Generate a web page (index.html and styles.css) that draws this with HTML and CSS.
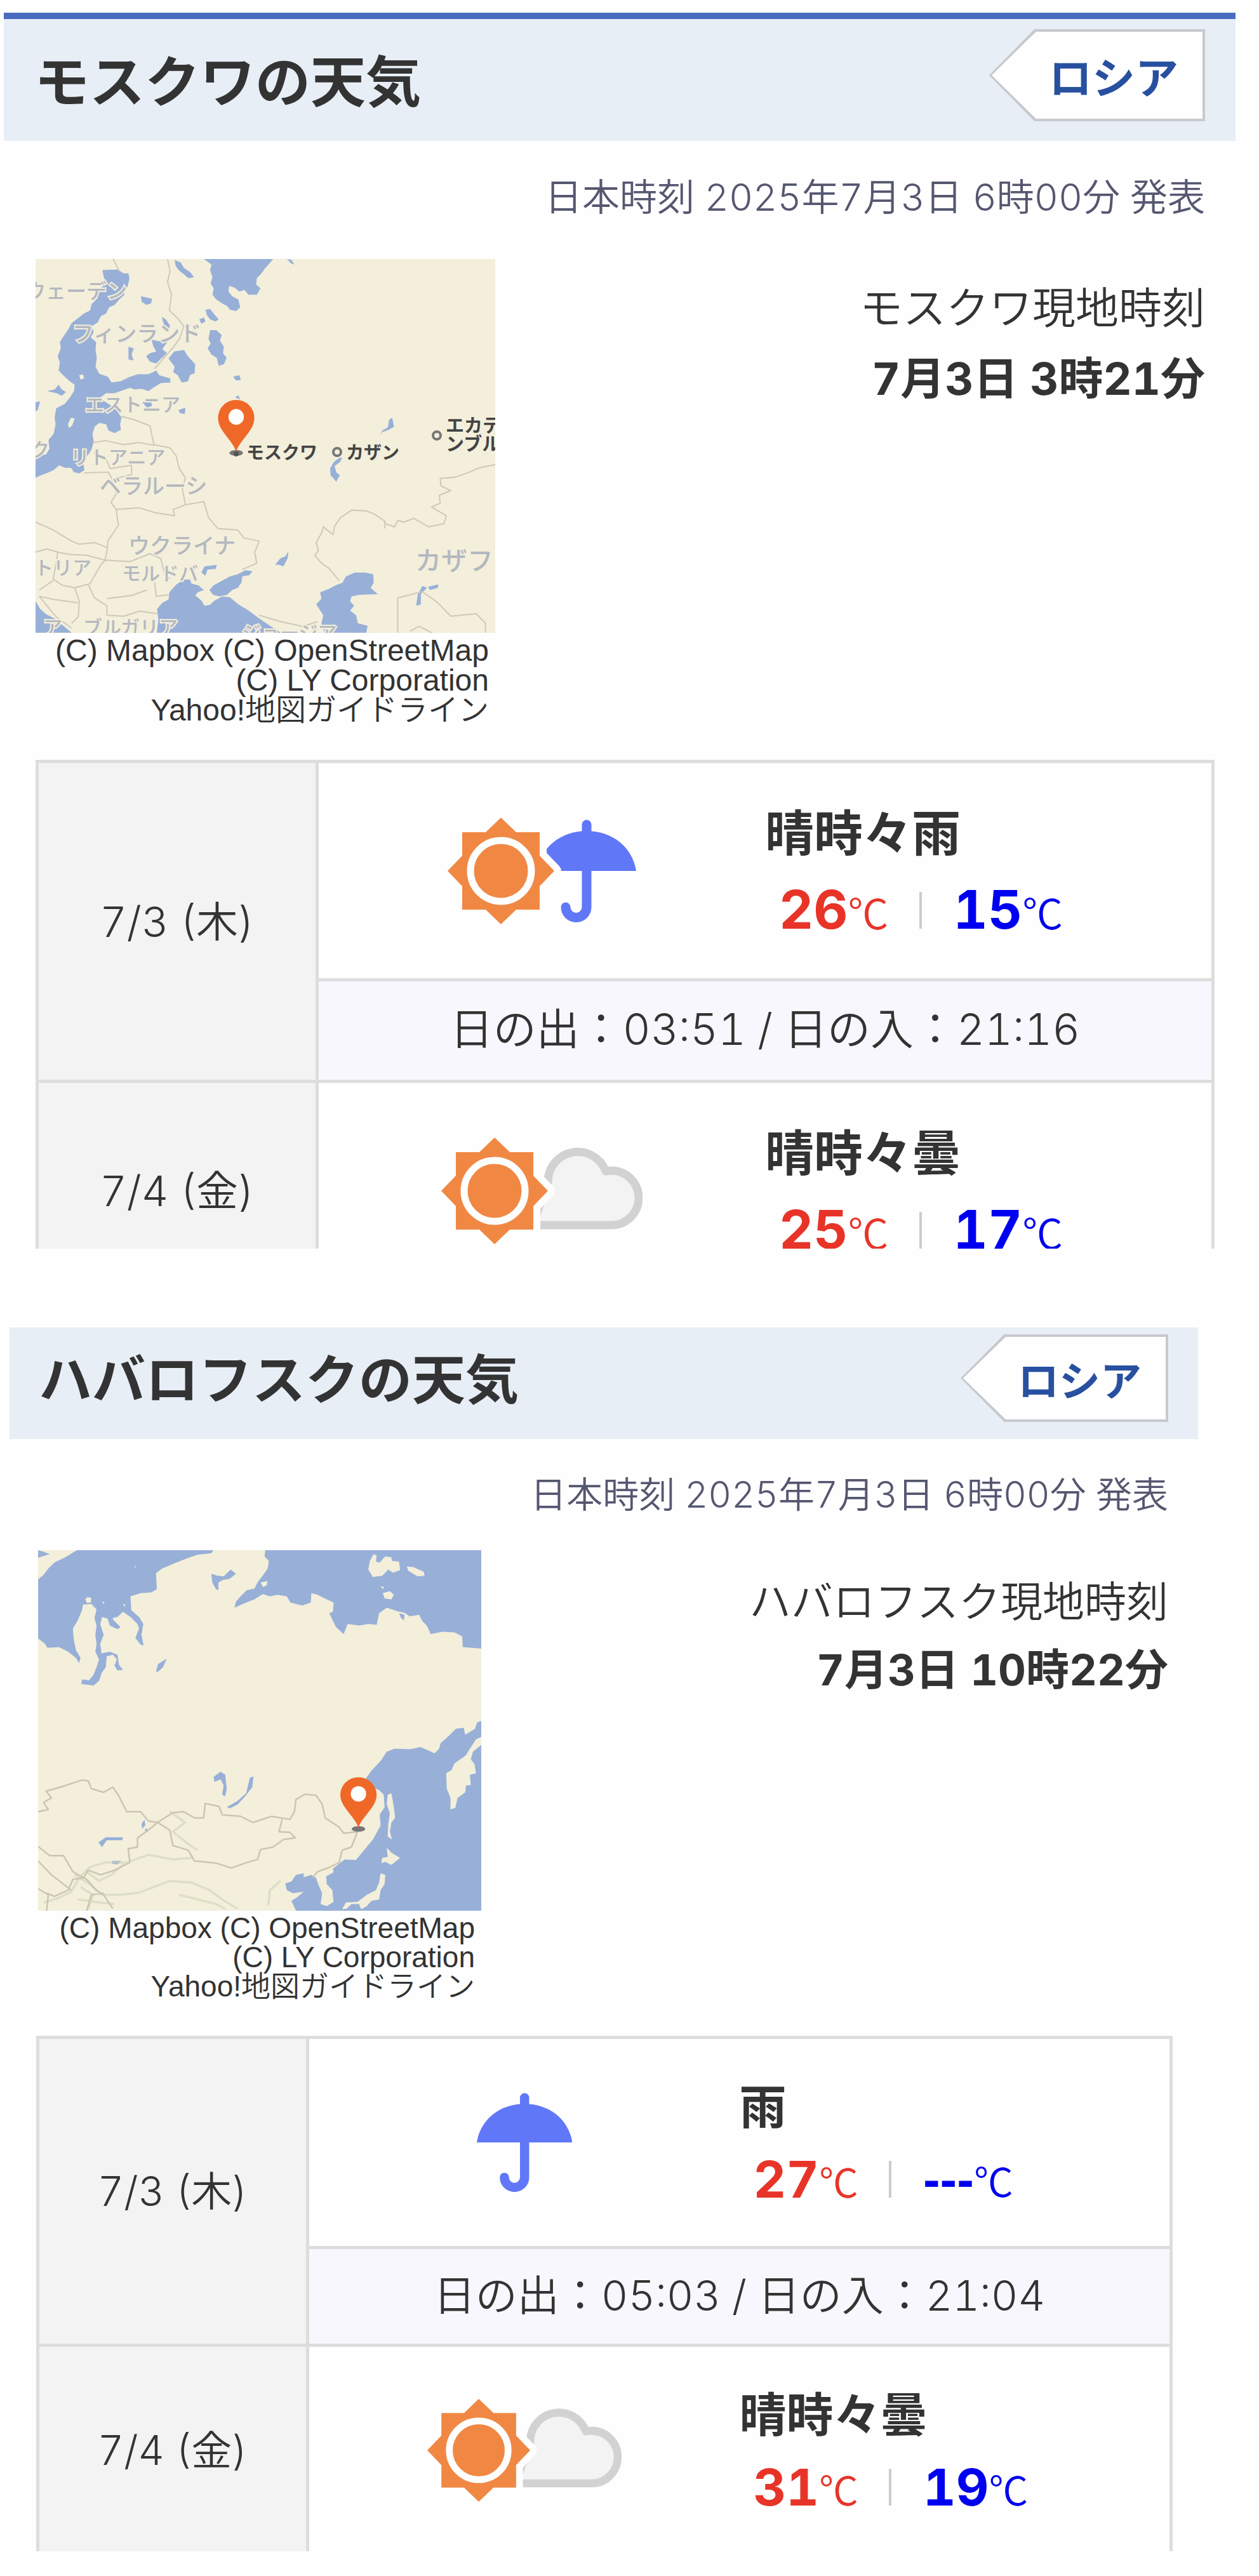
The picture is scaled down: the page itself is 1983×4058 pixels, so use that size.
FILE: index.html
```html
<!DOCTYPE html>
<html lang="ja">
<head>
<meta charset="utf-8">
<meta name="viewport" content="width=device-width, initial-scale=1">
<title>ロシアの天気</title>
<link rel="stylesheet" href="styles.css">
</head>
<body>
<svg class="defs" aria-hidden="true">
  <defs>
    <g id="sun">
      <path d="M-61-61H-24L0-84 24-61H61V-24L84 0 61 24V61H24L0 84-24 61H-61V24L-84 0-61-24Z" fill="#f08844" stroke="#fefefe" stroke-width="22" stroke-linejoin="round" paint-order="stroke"/>
      <circle r="48" fill="none" stroke="#fefefe" stroke-width="11"/>
    </g>
    <g id="umbrella">
      <path d="M-78 0C-72-38-40-63 0-63S72-38 78 0Z" fill="#6078f8"/>
      <path d="M0-73V57a16 16 0 0 1-33 0" fill="none" stroke="#6078f8" stroke-width="15" stroke-linecap="round"/>
    </g>
    <path id="cloud" d="M60 54H184A43 43 0 0 0 184-32L175-31A47 47 0 0 0 84-14L60 54" fill="#f3f3f3" stroke="#d2d2d2" stroke-width="13" stroke-linejoin="round"/>
    <g id="pin">
      <ellipse cy="110" rx="22" ry="9" fill="#777"/>
      <path d="M0 106C-14 66-59 40-59-1A59 57 0 0 1 59-1C59 40 14 66 0 106Z" fill="#f06828"/>
      <circle cy="-4" r="25" fill="#fefefe"/>
    </g>
  </defs>
</svg>

<section class="city city-moscow">
  <header class="city-head">
    <h1 class="city-title">モスクワの天気</h1>
    <a class="country" href="#"><span class="country-name">ロシア</span></a>
  </header>
  <p class="issued">日本時刻 2025年7月3日 6時00分 発表</p>
  <div class="place">
    <figure class="map">
      <svg class="map-art" viewBox="0 0 724 589" role="img" aria-label="モスクワ周辺の地図">
        <rect width="724" height="589" fill="#f3efdb"/>
        <g transform="scale(.4847 .4976) translate(-33 -37)">
          <g fill="#98b0d8">
            <path d="M250 72L300 70 318 82 335 82 338 100 332 125 318 135 322 150 305 165 290 182 272 190 262 210 245 218 235 238 215 250 222 268 212 285 230 300 228 325 232 350 228 378 240 400 268 410 280 428 310 424 335 412 365 402 400 402 425 390 435 405 470 415 472 428 440 430 415 445 400 455 378 448 355 450 340 445 318 452 290 462 262 462 240 478 258 488 285 505 300 520 312 540 308 560 310 578 290 588 270 580 262 560 240 556 225 568 218 590 222 615 215 640 200 662 188 685 192 705 175 716 158 712 148 698 128 698 110 690 92 705 70 715 50 722 33 730V655L50 660 68 655 78 638 75 610 92 590 98 560 95 540 100 510 128 495 145 475 158 455 160 435 145 425 128 410 108 390 112 365 105 345 115 320 112 300 125 280 138 262 150 240 170 225 190 210 210 200 215 180 235 160 228 140 245 130 262 112 255 95Z"/>
            <path d="M580 37L605 55 600 72 608 95 602 115 612 130 608 150 620 165 640 178 655 185 665 198 685 202 698 190 692 165 672 155 660 140 662 122 680 128 695 140 712 135 725 150 752 150 764 130 750 118 752 98 765 85 780 65 792 52 805 37ZM485 40L505 48 515 65 535 78 548 95 530 98 515 85 498 72 488 58ZM850 37L865 40 874 55 862 50ZM375 155L392 158 412 163 408 178 392 182 378 172ZM585 198L600 195 612 210 628 228 618 235 600 228 590 215ZM565 228L580 222 585 235 572 242ZM600 262L620 262 638 278 632 295 645 315 642 335 654 350 645 370 628 375 622 350 605 340 592 320 602 305 595 290ZM483 330L515 325 528 345 552 370 550 398 535 405 528 425 508 428 495 405 480 395 485 378 465 352ZM443 220L458 230 470 248 465 262 452 250ZM410 292L435 298 455 290 462 300 445 322 460 335 438 355 425 368 405 362 392 345 405 335 425 330 415 312ZM335 315L352 320 345 340 352 358 335 355ZM675 410L695 405 700 420 685 422ZM70 455L95 450 108 435 118 450 132 458 118 470 102 462ZM33 490L48 488 40 515 33 520ZM380 490L408 488 412 502 395 508ZM498 515L520 508 518 528 502 525ZM682 475L692 468 698 482Z"/>
            <path d="M427 1220L432 1180 428 1145 445 1125 465 1115 468 1092 490 1068 515 1052 535 1052 540 1065 562 1070 580 1085 560 1092 552 1102 572 1118 582 1135 600 1132 615 1118 640 1105 665 1108 692 1130 725 1150 760 1175 790 1195 830 1220ZM598 1085L612 1070 640 1055 665 1042 690 1035 715 1022 738 1025 728 1038 705 1042 702 1062 690 1078 672 1085 655 1100 630 1105 610 1100ZM972 1220L962 1190 968 1165 945 1130 962 1112 958 1092 985 1082 1008 1070 1030 1062 1042 1042 1070 1030 1105 1030 1130 1035 1132 1062 1122 1078 1145 1098 1085 1100 1060 1105 1055 1120 1068 1135 1055 1150 1075 1165 1080 1190 1112 1198 1108 1220ZM33 1120L48 1145 68 1162 95 1175 112 1190 132 1205 150 1220H33ZM812 1005L828 985 845 978 855 962 852 985 838 1010 825 1005ZM572 1030L582 1010 622 1005 618 1018 592 1020 585 1040ZM1270 1135L1275 1100 1290 1072 1305 1078 1285 1098 1285 1130ZM1308 1075L1342 1067 1340 1078 1315 1085ZM990 700L1002 680 1018 668 1030 665 1022 680 1005 692 1010 712 1022 722 1010 742 992 722ZM1152 595L1160 580 1178 570 1182 545 1192 540 1198 568 1180 578 1160 585Z"/>
          </g>
          <path d="M138 560l10-20 12 2-8 22-10 8zM175 405l12-2 4 12-12 4z" fill="#f3efdb"/>
          <g fill="none" stroke="#cfc8b8" stroke-width="4" stroke-linejoin="round">
            <path d="M285 37L305 75M462 37L470 75 462 110 475 150 468 200 495 225 515 250 500 290 478 320 450 350 420 385M310 535L350 545 405 565 412 600 418 625 470 635 490 660 500 700 520 730 510 765 520 815 480 830 485 850 420 840 370 825 295 830 278 808 295 780 285 740 270 712 190 714M222 618L260 612 320 625 370 618 418 627M222 650L260 665 275 700 345 690 345 720 300 730M520 815L580 805 595 855 625 890 690 895 710 920 760 930 745 965 752 1000 705 1020M295 830L302 880 268 930 265 965 258 990 340 995 405 970 440 985 450 1025 470 1050M33 870L90 895 150 930 175 940 225 935 265 950M33 965L70 955 105 965 100 1000 90 1050 120 1070 160 1078 210 1065 245 1005 260 990M105 965L140 972 200 975 258 990M160 1078L175 1120 172 1170 150 1190M205 1070L225 1110 265 1135 265 1165 320 1168 370 1152 428 1160M265 1112L345 1102 395 1085M420 1060L425 1105 465 1100M45 1105L95 1115 170 1125M45 1085L90 1055M45 1105L100 1170 150 1205M760 1165L830 1185 900 1200 950 1185"/>
            <path d="M1527 688L1475 698 1435 715 1395 728 1348 732 1350 755 1382 770 1345 785 1348 810 1320 822 1368 850 1360 875 1310 885 1262 858 1230 870 1210 865 1200 885 1170 875 1165 865 1135 845 1110 835 1060 832 1025 855 1005 882 1000 910 968 885 962 905 945 935 952 960 940 975 962 1000 985 1015 1020 1055M1210 1220V1110L1290 1090 1340 1125 1382 1168 1465 1160 1495 1190V1220M1250 1215L1280 1200 1320 1220M1168 865V890"/>
          </g>
          <use href="#pin" x="685" y="541"/>
        </g>
        <g class="label-country">
          <text x="144" y="62" font-size="32" text-anchor="end">ウェーデン</text>
          <text x="58" y="130" font-size="34">フィンランド</text>
          <text x="78" y="240" font-size="30">エストニア</text>
          <text x="22" y="311" font-size="30" text-anchor="end">ク</text>
          <text x="55" y="323" font-size="30">リトアニア</text>
          <text x="101" y="370" font-size="34">ベラルーシ</text>
          <text x="146" y="464" font-size="34">ウクライナ</text>
          <text x="88" y="497" font-size="30" text-anchor="end">トリア</text>
          <text x="136" y="506" font-size="30">モルドバ</text>
          <text x="598" y="490" font-size="41">カザフ</text>
          <text x="12" y="591" font-size="30">ア</text>
          <text x="75" y="591" font-size="30">ブルガリア</text>
          <text x="325" y="600" font-size="30">ジョージア</text>
        </g>
        <g class="label-city">
          <text x="332" y="315" font-size="28">モスクワ</text>
          <text x="489" y="315" font-size="28">カザン</text>
          <text x="646" y="273" font-size="29">エカテ</text>
          <text x="646" y="302" font-size="29">ンブル</text>
        </g>
        <g fill="#f3efdb" stroke="#777" stroke-width="4">
          <circle cx="475" cy="304" r="6"/>
          <circle cx="632" cy="278" r="6"/>
        </g>
        <circle cx="316" cy="307" r="4" fill="#555"/>
      </svg>
      <figcaption class="credit">(C) Mapbox (C) OpenStreetMap<br>(C) LY Corporation<br><a class="credit-link" href="#">Yahoo!地図ガイドライン</a></figcaption>
    </figure>
    <p class="local"><span class="local-name">モスクワ現地時刻</span><time class="local-time">7月3日 3時21分</time></p>
  </div>
  <div class="forecast">
    <table class="days">
      <tbody>
        <tr class="day">
          <th class="date" rowspan="2" scope="rowgroup">7/3 (木)</th>
          <td class="weather"><div class="summary">
            <span class="icon"><svg class="icon-pair" viewBox="-84 -85 298 170" role="img" aria-label="晴時々雨"><use href="#umbrella" x="135"/><use href="#sun"/></svg></span>
            <div class="detail"><p class="sky">晴時々雨</p><p class="temps"><span class="high"><b class="deg">26</b>℃</span><span class="low"><b class="deg">15</b>℃</span></p></div>
          </div></td>
        </tr>
        <tr><td class="sunrise">日の出：03:51 / 日の入：21:16</td></tr>
        <tr class="day">
          <th class="date" scope="row">7/4 (金)</th>
          <td class="weather"><div class="summary">
            <span class="icon"><svg class="icon-wide" viewBox="-84 -85 317 170" role="img" aria-label="晴時々曇"><use href="#cloud"/><use href="#sun"/></svg></span>
            <div class="detail"><p class="sky">晴時々曇</p><p class="temps"><span class="high"><b class="deg">25</b>℃</span><span class="low"><b class="deg">17</b>℃</span></p></div>
          </div></td>
        </tr>
      </tbody>
    </table>
  </div>
</section>

<section class="city city-khabarovsk">
  <header class="city-head">
    <h1 class="city-title">ハバロフスクの天気</h1>
    <a class="country" href="#"><span class="country-name">ロシア</span></a>
  </header>
  <p class="issued">日本時刻 2025年7月3日 6時00分 発表</p>
  <div class="place">
    <figure class="map">
      <svg class="map-art" viewBox="42 45 1440 1172" role="img" aria-label="ハバロフスク周辺の地図">
        <rect x="42" y="45" width="1440" height="1172" fill="#98b0d8"/>
        <g fill="#f3efdb">
          <path d="M42 332L65 350 72 362 110 360 140 375 165 395 175 412 180 395 165 370 158 335 155 300 170 275 185 240 188 222 215 220 232 238 225 265 232 290 228 320 232 350 228 375 240 400 232 425 222 450 208 468 185 465 182 480 222 485 240 470 248 445 262 425 265 390 285 385 298 400 290 420 300 436 318 434 305 418 300 385 275 375 248 380 244 350 255 320 244 285 250 262 268 268 275 290 300 302 310 295 285 270 285 265 300 262 318 245 342 262 365 285 370 300 358 330 375 352 385 355 378 320 384 285 370 262 345 240 342 195 375 185 410 182 428 172 425 120 445 105 480 90 525 72 560 60 605 55 612 45 780 45 778 65 792 80 788 105 770 130 755 150 745 170 720 175 700 195 685 212 680 232 712 218 745 205 772 188 795 195 820 190 850 195 862 215 900 225 928 215 930 185 950 190 980 205 1002 215 1000 245 988 250 1010 295 1035 318 1048 285 1085 290 1115 285 1142 288 1150 250 1175 232 1215 245 1232 248 1250 260 1280 255 1290 275 1305 290 1318 318 1355 310 1395 312 1420 325 1422 360 1482 365V600L1468 605 1462 625 1430 645 1425 622 1400 625 1375 650 1350 672 1345 690 1330 705 1308 695 1285 685 1250 692 1200 690 1175 700 1155 730 1125 762 1105 790 1125 815 1150 825 1165 840 1168 880 1152 905 1155 940 1130 985 1105 1015 1075 1052 1038 1050 1025 1060 1000 1080 1002 1092 978 1105 980 1130 998 1150 1002 1188 980 1202 960 1195 965 1160 952 1130 945 1110 930 1100 905 1108 905 1095 880 1100 865 1122 845 1128 850 1150 870 1160 905 1155 885 1172 865 1185 880 1217H42Z"/>
          <path d="M42 45H168L130 68 95 85 75 105 60 125 42 140V70L80 58 60 50ZM1132 58L1142 62 1140 82 1152 85 1170 65 1190 68 1192 80 1215 82 1218 110 1195 118 1180 108 1160 128 1130 132 1115 108 1120 80ZM1240 98L1262 100 1295 115 1298 128 1275 130 1245 112ZM1162 185L1185 178 1198 190 1190 205 1168 202ZM1155 162l10 2-2 8zM195 205l8-8 12 4-2 14-12 2zM765 150l22-5-2 14-12 6zM250 212l8 2-3 7zM318 220l8 2-3 7zM355 96l5 2-3 5z"/>
          <path d="M1482 652L1465 660 1445 690 1432 712 1395 738 1385 760 1368 770 1370 820 1382 850 1382 888 1398 882 1405 850 1430 832 1432 810 1448 808 1445 775 1465 770 1460 740 1448 725 1455 700 1482 678ZM1178 840L1190 835 1198 880 1202 915 1190 930 1185 960 1192 985 1178 975 1180 935 1185 900 1175 870ZM1175 1012L1190 1028 1218 1045 1200 1060 1190 1068 1170 1058 1158 1062 1160 1045 1178 1042ZM1155 1095L1170 1100 1168 1130 1155 1150 1150 1180 1125 1185 1110 1202 1092 1212 1085 1195 1060 1195 1045 1210 1030 1212 1042 1190 1080 1188 1110 1165 1140 1150 1150 1125Z"/>
        </g>
        <g fill="#98b0d8">
          <path d="M605 122L625 128 645 130 668 108 685 122 665 138 642 142 628 150 628 175 620 172 608 150ZM425 440L432 415 460 398 448 425 432 440ZM655 880L690 860 718 835 730 785 742 780 738 815 715 845 690 872 665 884ZM612 782L635 765 650 775 655 820 650 845 640 840 645 810 635 790 615 798ZM238 995L262 978 318 978 315 988 265 988 250 1010ZM282 1055L312 1055 300 1066 282 1064ZM378 935L388 920 390 940 380 950ZM388 955L395 948 398 962ZM1215 250l18 5-2 18-10-8z"/>
        </g>
        <g fill="none" stroke="#cfd2b8" stroke-width="7" stroke-linejoin="round" opacity=".6">
          <path d="M60 1190L110 1175 150 1155 175 1110 210 1075 260 1060 330 1060 400 1035 480 1050 545 1045M160 1100L210 1130 250 1165 310 1165 370 1158 430 1135 470 1120 540 1125 600 1150 640 1180 690 1210M200 1090L240 1120 280 1100 320 1065M180 1140L220 1165 205 1210M470 895L520 930 480 960 530 1000 560 1020M500 1165L560 1180 620 1195 650 1210M170 1180L240 1190 290 1195M790 1200L795 1150 830 1120"/>
        </g>
        <g fill="none" stroke="#cbc4b0" stroke-width="5" stroke-linejoin="round">
          <path d="M42 895L75 888 60 865 85 850 68 828 115 815 185 792 205 795 215 820 255 832 285 815 305 845 330 895 375 895 400 925 430 930 480 898 515 895 550 915 580 915 585 868 630 878 640 905 700 910 740 930 800 910 860 920 875 895 880 855 910 838 945 842 965 870 975 915 1020 945 1035 965 1080 960 1060 1010 1030 1020 1020 1060M430 930L400 955 365 980 365 1010 335 1015 340 1060 290 1085 245 1100 205 1085 190 1110 155 1115 140 1150 95 1170 70 1160M430 930L470 955 480 1005 530 1020 550 1055 620 1062 670 1078 715 1062 755 1050 765 1018 805 1010 840 985 878 980 860 962 825 960 835 920M42 1008L80 1038 125 1038 155 1090 200 1115 230 1150 255 1165 285 1210M42 1055L85 1100 150 1150M42 1145L75 1165 70 1217M200 1217L215 1165 255 1160M1020 1060L990 1075 950 1090 935 1108"/>
        </g>
        <use href="#pin" x="1083" y="841"/>
      </svg>
      <figcaption class="credit">(C) Mapbox (C) OpenStreetMap<br>(C) LY Corporation<br><a class="credit-link" href="#">Yahoo!地図ガイドライン</a></figcaption>
    </figure>
    <p class="local"><span class="local-name">ハバロフスク現地時刻</span><time class="local-time">7月3日 10時22分</time></p>
  </div>
  <div class="forecast">
    <table class="days">
      <tbody>
        <tr class="day">
          <th class="date" rowspan="2" scope="rowgroup">7/3 (木)</th>
          <td class="weather"><div class="summary">
            <span class="icon"><svg class="icon-single" viewBox="-78 -85 156 170" role="img" aria-label="雨"><use href="#umbrella"/></svg></span>
            <div class="detail"><p class="sky">雨</p><p class="temps"><span class="high"><b class="deg">27</b>℃</span><span class="low"><b class="deg deg-none">---</b>℃</span></p></div>
          </div></td>
        </tr>
        <tr><td class="sunrise">日の出：05:03 / 日の入：21:04</td></tr>
        <tr class="day">
          <th class="date" scope="row">7/4 (金)</th>
          <td class="weather"><div class="summary">
            <span class="icon"><svg class="icon-wide" viewBox="-84 -85 317 170" role="img" aria-label="晴時々曇"><use href="#cloud"/><use href="#sun"/></svg></span>
            <div class="detail"><p class="sky">晴時々曇</p><p class="temps"><span class="high"><b class="deg">31</b>℃</span><span class="low"><b class="deg">19</b>℃</span></p></div>
          </div></td>
        </tr>
      </tbody>
    </table>
  </div>
</section>
</body>
</html>
```
FILE: styles.css
```css
* {
  box-sizing: border-box;
}

body {
  margin: 0;
  padding: 20px 0 39px;
  background: #fefefe;
  color: #333;
  font-family: Inter, "Noto Sans CJK JP", sans-serif;
  font-optical-sizing: none;
  font-variant-numeric: tabular-nums;
  font-weight: 350;
}

h1, p, figure {
  margin: 0;
}

a {
  color: inherit;
  text-decoration: none;
}

.defs {
  position: absolute;
  width: 0;
  height: 0;
}

/* Per-city sizing */
.city-moscow {
  --title: 87px;
  --tag: 68px;
  --meta: 59px;
  --body: 68px;
  --time: 70px;
  --date: 66px;
  --unit: 64px;
  --sky: 77px;
  --deg: 84px;
  --credit: 48px;
  --credit-line: 47px;
  --local-line: 111px;
  --line: 120px;
  --map-width: 724px;
  --date-width: 441px;
  --day-height: 344px;
  --sun-height: 160px;
  --icon-height: 170px;
  margin: 0 37px 0 6px;
}

.city-khabarovsk {
  --title: 84px;
  --tag: 65px;
  --meta: 57px;
  --body: 66px;
  --time: 68px;
  --date: 64px;
  --unit: 62px;
  --sky: 74px;
  --deg: 80px;
  --credit: 46px;
  --credit-line: 46px;
  --local-line: 107px;
  --line: 114px;
  --map-width: 698px;
  --date-width: 425px;
  --day-height: 331px;
  --sun-height: 154px;
  --icon-height: 164px;
  margin: 124px 96px 0 15px;
}

/* Heading bar */
.city-head {
  display: flex;
  justify-content: space-between;
  align-items: center;
  background: #e7eef6;
}

.city-moscow .city-head {
  padding: 16px 48px 31px 48px;
  border-top: 10px solid #4a6cc0;
}

.city-khabarovsk .city-head {
  padding: 11px 47px 27px 46px;
}

.city-title {
  padding-top: 6px;
  font-size: var(--title);
  line-height: 120px;
  font-weight: 700;
}

.city-moscow .city-title {
  padding-top: 22px;
}

.country {
  position: relative;
  display: flex;
  align-items: center;
  justify-content: flex-end;
  width: 340px;
  height: 145px;
  padding-right: 42px;
  background: #c8c8ce;
  clip-path: polygon(21% 0, 100% 0, 100% 100%, 21% 100%, 0 50%);
  color: #2850a0;
  font-size: var(--tag);
  font-weight: 700;
}

.city-khabarovsk .country {
  width: 327px;
  height: 138px;
}

.country::before {
  content: "";
  position: absolute;
  inset: 4px;
  background: #fefefe;
  clip-path: polygon(21% 0, 100% 0, 100% 100%, 21% 100%, 0 50%);
}

.country-name {
  position: relative;
}

.issued {
  text-align: right;
  color: #555770;
  font-size: var(--meta);
  line-height: 64px;
}

.city-moscow .issued {
  margin: 57px 48px 65px;
}

.city-khabarovsk .issued {
  margin: 56px 47px 55px;
}

/* Map and local time */
.place {
  display: flex;
  justify-content: space-between;
  align-items: flex-start;
}

.city-moscow .place {
  padding: 0 48px 0 50px;
}

.city-khabarovsk .place {
  padding: 0 47px 0 45px;
}

.map {
  width: var(--map-width);
}

.map-art {
  display: block;
  width: 100%;
  height: auto;
}

.label-country {
  fill: #b4b8bf;
  stroke: #f3efdb;
  stroke-width: 4px;
  paint-order: stroke;
  font-family: "Noto Sans CJK JP", sans-serif;
  font-weight: 500;
}

.label-city {
  fill: #444;
  stroke: #f3efdb;
  stroke-width: 4px;
  paint-order: stroke;
  font-family: "Noto Sans CJK JP", sans-serif;
  font-weight: 700;
}

.credit {
  padding: 4px 10px 0 0;
  text-align: right;
  font-family: "Liberation Sans", "Noto Sans CJK JP", sans-serif;
  font-size: var(--credit);
  line-height: var(--credit-line);
  white-space: nowrap;
}

.local {
  display: flex;
  flex-direction: column;
  padding-top: 22px;
  text-align: right;
  font-size: var(--body);
  line-height: var(--local-line);
}

.city-khabarovsk .local {
  padding-top: 28px;
}

.local-time {
  font-size: var(--time);
  font-weight: 700;
}

/* Forecast table, cut off after the second day */
.forecast {
  margin-top: 55px;
  overflow: hidden;
}

.city-moscow .forecast {
  max-height: 770px;
  margin-right: 33px;
  margin-left: 50px;
}

.city-khabarovsk .forecast {
  max-height: 812px;
  margin-right: 40px;
  margin-left: 42px;
}

.days {
  width: 100%;
  border-collapse: collapse;
  table-layout: fixed;
}

.date, .weather, .sunrise {
  padding: 0;
  border: 5px solid #ddd;
}

.date {
  width: var(--date-width);
  padding-bottom: 10px;
  background: #f3f3f3;
  font-size: var(--date);
  font-weight: 350;
}

.day {
  height: var(--day-height);
}

.sunrise {
  height: var(--sun-height);
  padding-bottom: 14px;
  background: #f8f7fd;
  font-size: var(--body);
  text-align: center;
}

.summary {
  display: flex;
  align-items: center;
}

.icon, .detail {
  width: 50%;
}

.icon {
  display: flex;
  justify-content: center;
}

.detail {
  padding-top: 4px;
}

.icon-pair, .icon-wide, .icon-single {
  height: var(--icon-height);
}

.sky {
  font-size: var(--sky);
  font-weight: 700;
  line-height: var(--line);
}

.temps {
  display: flex;
  align-items: center;
  padding-left: 22px;
  font-family: "Noto Sans CJK JP", sans-serif;
  font-size: var(--unit);
  line-height: var(--line);
}

.deg {
  font-family: Inter, sans-serif;
  font-size: var(--deg);
  font-weight: 700;
}

.deg-none {
  font-family: "Liberation Sans", sans-serif;
}

.high {
  color: #e83428;
}

.low {
  color: #0000f0;
}

.high::after {
  content: "";
  display: inline-block;
  width: 4px;
  height: 58px;
  margin: 0 50px 0 48px;
  background: #ccc;
}
```
